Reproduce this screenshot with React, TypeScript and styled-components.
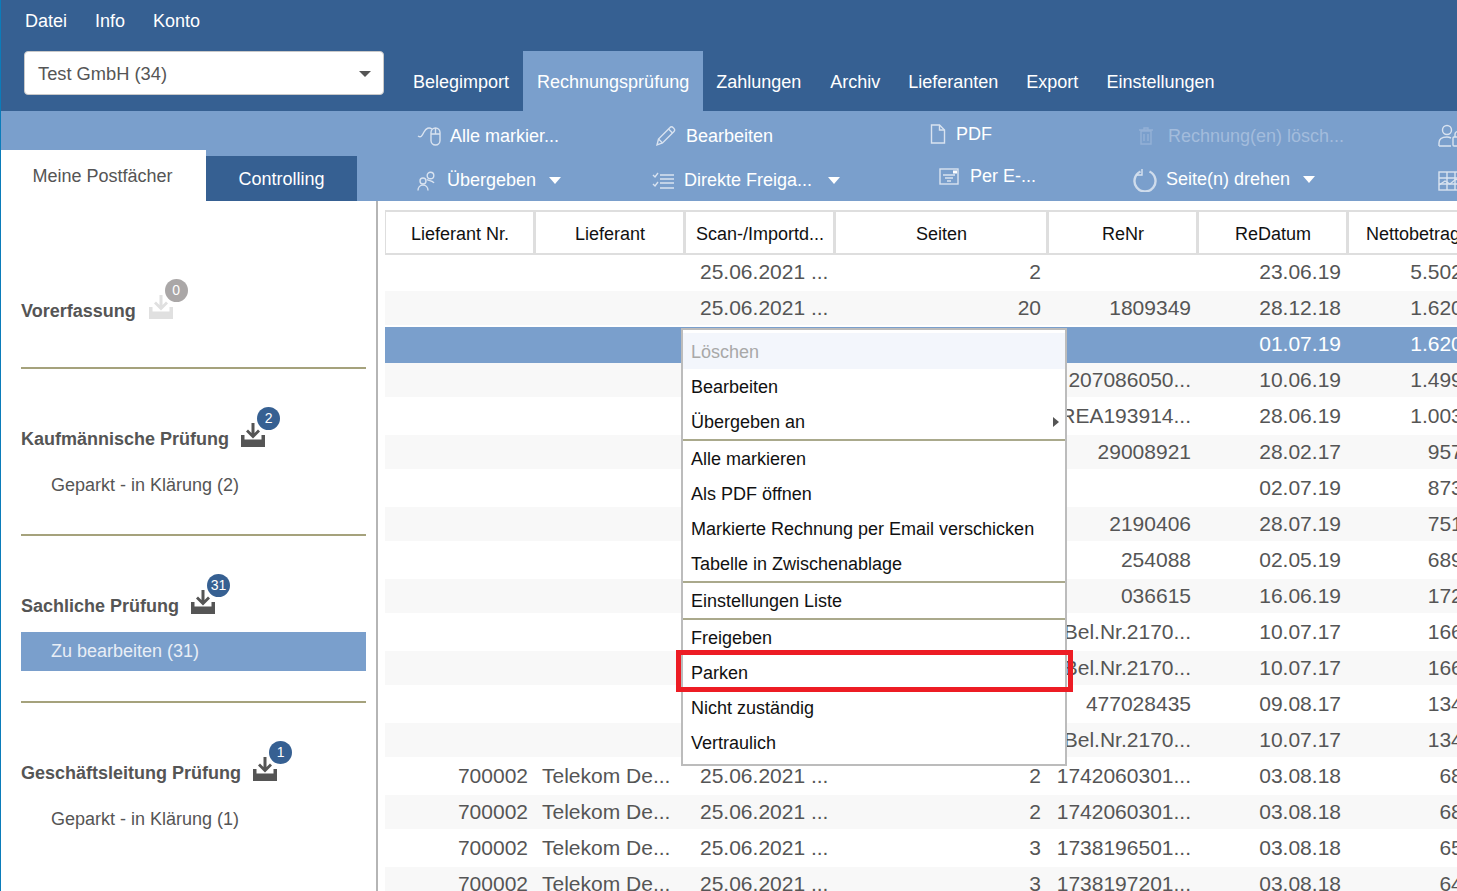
import React from 'react';
import styled, { createGlobalStyle } from 'styled-components';

const GlobalStyle = createGlobalStyle`
  html, body {
    margin: 0;
    height: 100%;
    overflow: hidden;
    background: #fff;
    font-family: "Liberation Sans", Arial, sans-serif;
  }
`;

const Page = styled.div`
  position: relative;
  width: 1457px;
  height: 891px;
  overflow: hidden;
  box-sizing: border-box;
  border-left: 1px solid #0b7cba;
`;

const TopBar = styled.header`
  height: 111px;
  background: #366092;
  display: grid;
  grid-template-columns: 383px 1fr;
  grid-template-rows: 41px 70px;
  color: #fff;
  font-size: 18px;
`;

const MenuRow = styled.nav`
  grid-column: 1 / 3;
  display: flex;
  gap: 28px;
  padding: 2px 0 0 24px;
  align-items: center;
`;

const CompanySelect = styled.div`
  width: 360px;
  height: 44px;
  margin: 10px 0 0 23px;
  box-sizing: border-box;
  background: #fff;
  border: 1px solid #c9c9c9;
  border-radius: 4px;
  color: #555;
  font-size: 18.3px;
  display: flex;
  align-items: center;
  justify-content: space-between;
  padding: 2px 12px 0 13px;
`;

const SelectCaret = styled.span`
  border-left: 6px solid transparent;
  border-right: 6px solid transparent;
  border-top: 6px solid #555;
`;

const MainTabs = styled.div`
  display: flex;
  align-items: stretch;
  padding-top: 10px;
  padding-left: 15px;
`;

const MainTab = styled.div<{ $active?: boolean; $right?: number }>`
  padding: 21px ${(p) => p.$right ?? 14}px 0 14px;
  margin-right: ${(p) => (p.$active ? '-1px' : '0')};
  background: ${(p) => (p.$active ? '#7a9fcc' : 'transparent')};
  white-space: nowrap;
`;

const ToolStrip = styled.div`
  height: 90px;
  background: #7a9fcc;
  display: flex;
  align-items: flex-end;
`;

const SideTabs = styled.div`
  width: 356px;
  display: flex;
  align-items: flex-end;
  flex: none;
`;

const SideTab = styled.div<{ $active?: boolean }>`
  box-sizing: border-box;
  width: ${(p) => (p.$active ? '205px' : '151px')};
  height: ${(p) => (p.$active ? '51px' : '45px')};
  padding: ${(p) => (p.$active ? '16px 2px 0 0' : '13px 0 0 0')};
  background: ${(p) => (p.$active ? '#fff' : '#366092')};
  color: ${(p) => (p.$active ? '#555' : '#fff')};
  font-size: 18px;
  text-align: center;
`;

const ToolGrid = styled.div`
  flex: 1;
  height: 90px;
  display: grid;
  grid-template-columns: 236px 277px 204px 304px 1fr;
  grid-template-rows: 50px 39px;
  padding-left: 60px;
`;

const ToolItem = styled.div<{ $disabled?: boolean; $gap?: number; $indent?: number; $lift?: number }>`
  display: flex;
  align-items: center;
  gap: ${(p) => p.$gap ?? 9}px;
  margin-left: ${(p) => p.$indent ?? 0}px;
  padding-bottom: ${(p) => p.$lift ?? 0}px;
  color: ${(p) => (p.$disabled ? '#a3bcdc' : '#fff')};
  font-size: 18px;
  white-space: nowrap;
  svg {
    flex: none;
    fill: none;
    stroke: ${(p) => (p.$disabled ? '#94b1d6' : '#d9e3f0')};
    stroke-width: 1.4;
  }
`;

const ToolCaret = styled.span<{ $left?: number }>`
  margin-left: ${(p) => p.$left ?? 4}px;
  border-left: 6px solid transparent;
  border-right: 6px solid transparent;
  border-top: 7px solid #fff;
`;

const Body = styled.div`
  display: flex;
  height: 690px;
`;

const Sidebar = styled.aside`
  width: 377px;
  box-sizing: border-box;
  flex: none;
  border-right: 2px solid #b5b5b5;
  padding: 0 10px 0 20px;
`;

const Section = styled.section<{ $height: number; $ruled?: boolean }>`
  box-sizing: border-box;
  height: ${(p) => p.$height}px;
  border-bottom: ${(p) => (p.$ruled ? '2px solid #a5a27c' : 'none')};
`;

const SectionHead = styled.div<{ $top: number; $gap?: number }>`
  display: flex;
  align-items: flex-end;
  gap: ${(p) => p.$gap ?? 12}px;
  padding-top: ${(p) => p.$top}px;
`;

const SectionTitle = styled.h3`
  margin: 0;
  font-size: 18px;
  line-height: 21px;
  font-weight: 700;
  color: #555;
`;

const InboxWrap = styled.span<{ $muted?: boolean }>`
  position: relative;
  display: block;
  width: 24px;
  height: 24px;
  margin-bottom: 3px;
  color: ${(p) => (p.$muted ? '#e0e0e0' : '#555')};
  svg {
    display: block;
  }
`;

const Badge = styled.span<{ $muted?: boolean }>`
  position: absolute;
  left: 16px;
  top: -16px;
  width: 23px;
  height: 23px;
  border-radius: 50%;
  background: ${(p) => (p.$muted ? '#aaa7a7' : '#366092')};
  color: #fff;
  font-size: 14px;
  line-height: 23px;
  text-align: center;
`;

const SubItem = styled.div<{ $active?: boolean; $top: number }>`
  margin-top: ${(p) => p.$top}px;
  height: 39px;
  padding-left: 30px;
  line-height: 39px;
  font-size: 18px;
  color: ${(p) => (p.$active ? '#e8eef6' : '#555')};
  background: ${(p) => (p.$active ? '#7a9fcc' : 'transparent')};
`;

const TableArea = styled.div`
  flex: 1;
  padding: 9px 0 0 7px;
  min-width: 0;
`;

const Columns = `
  display: grid;
  grid-template-columns: 150px 150px 150px 213px 150px 150px 150px;
  width: 1113px;
`;

const HeaderRow = styled.div`
  ${Columns}
  height: 45px;
`;

const HeaderCell = styled.div`
  box-sizing: border-box;
  border: 2px solid #dedede;
  border-left-width: 1px;
  padding: 2px 0 0 1px;
  background: #fff;
  color: #111;
  font-size: 18px;
  line-height: 41px;
  text-align: center;
  white-space: nowrap;
  overflow: hidden;

  &:last-child {
    text-align: left;
    padding-left: 17px;
  }
`;

const DataRow = styled.div<{ $tone: 'plain' | 'shade' | 'selected' }>`
  ${Columns}
  height: 36px;
  box-sizing: border-box;
  background: ${(p) =>
    p.$tone === 'selected' ? '#7a9fcc' : p.$tone === 'shade' ? '#f8f8f8' : '#fff'};
  border-bottom: ${(p) => (p.$tone === 'shade' ? '2px solid #fff' : 'none')};
  color: ${(p) => (p.$tone === 'selected' ? '#fff' : '#555')};
`;

const DataCell = styled.div<{ $right?: boolean; $pad?: number }>`
  font-size: 21px;
  line-height: 33px;
  white-space: nowrap;
  overflow: hidden;
  box-sizing: border-box;
  text-align: ${(p) => (p.$right ? 'right' : 'left')};
  padding: ${(p) => (p.$right ? `0 ${p.$pad ?? 7}px 0 0` : `0 0 0 ${p.$pad ?? 7}px`)};
`;

const ContextMenu = styled.div`
  position: absolute;
  left: 680px;
  top: 328px;
  width: 386px;
  height: 438px;
  box-sizing: border-box;
  padding-top: 3px;
  background: #fff;
  border: 2px solid #bcbcbc;
  color: #111;
  font-size: 18px;
`;

const MenuGroup = styled.div<{ $last?: boolean }>`
  border-bottom: ${(p) => (p.$last ? 'none' : '2px solid #aaa98c')};
`;

const MenuItem = styled.div<{ $disabled?: boolean }>`
  position: relative;
  height: ${(p) => (p.$disabled ? '36px' : '35px')};
  line-height: ${(p) => (p.$disabled ? '39px' : '37px')};
  padding-left: 8px;
  color: ${(p) => (p.$disabled ? '#a8a8a8' : '#111')};
  background: ${(p) => (p.$disabled ? '#f3f6fc' : 'transparent')};
`;

const SubArrow = styled.span`
  position: absolute;
  right: 6px;
  top: 13px;
  border-top: 5px solid transparent;
  border-bottom: 5px solid transparent;
  border-left: 6px solid #555;
`;

const Highlight = styled.div`
  position: absolute;
  left: 675px;
  top: 650px;
  width: 397px;
  height: 42px;
  box-sizing: border-box;
  border: 5px solid #ed1c24;
`;

const MouseIcon = () => (
  <svg width="24" height="20" viewBox="0 0 24 20">
    <rect x="14" y="2" width="9" height="17" rx="4.5" />
    <path d="M14 8h9M18.500 2v6M1 10c3 2 4 0 6-4s5-5 8-3" />
  </svg>
);

const PencilIcon = () => (
  <svg width="22" height="22" viewBox="0 0 22 22">
    <path d="M2 20l1.500-6L15 2.500a2 2 0 0 1 3 0l1 1a2 2 0 0 1 0 3L7.500 18z" />
    <path d="M3.500 14l4 4M13.500 4l4 4" />
  </svg>
);

const FileIcon = () => (
  <svg width="16" height="20" viewBox="0 0 16 20">
    <path d="M1.500 1h8l5 5v13h-13z" />
    <path d="M9.500 1v5h5" />
  </svg>
);

const TrashIcon = () => (
  <svg width="16" height="20" viewBox="0 0 16 20">
    <path d="M3 5h10v13H3zM1 4h14M6 4V2h4v2M6 8v7M10 8v7" />
  </svg>
);

const UsersIcon = () => (
  <svg width="18" height="20" viewBox="0 0 18 20">
    <circle cx="13.500" cy="4.500" r="3.300" />
    <circle cx="6" cy="10" r="3" />
    <path d="M1 19.500c0-3 2-5.500 5-5.500s5 2.500 5 5.500M10 8.500c2 1.500 5.500 1 7 3.500" />
  </svg>
);

const ChecklistIcon = () => (
  <svg width="23" height="18" viewBox="0 0 23 18">
    <path d="M8 3h14M8 7h14M8 11h14M8 16h14M1 3l2 2 3-4M1 12l2 2 3-4" />
  </svg>
);

const MailIcon = () => (
  <svg width="20" height="17" viewBox="0 0 20 17">
    <rect x="1" y="1" width="18" height="15" />
    <path d="M4 7h12M6 10h8M8 13h4" />
    <rect x="14" y="2.500" width="4" height="3" fill="#fff" stroke="none" />
  </svg>
);

const RotateIcon = () => (
  <svg width="24" height="24" viewBox="0 0 24 24">
    <path d="M7.500 3.500a10.500 10.500 0 1 0 9 0" strokeWidth="2.400" stroke="#cfdcec" />
    <path d="M9 1v6H3.500" strokeWidth="1.400" />
  </svg>
);

const UserLockIcon = () => (
  <svg width="26" height="24" viewBox="0 0 26 24">
    <circle cx="9" cy="6" r="4.500" />
    <path d="M1 22v-3c0-4 3-6 8-6 2 0 3 .5 4 1M1 22h12" />
    <rect x="15" y="13" width="10" height="9" rx="1" />
    <path d="M17 13v-2.500a3 3 0 0 1 6 0V13" />
  </svg>
);

const ChartIcon = () => (
  <svg width="26" height="20" viewBox="0 0 26 20">
    <rect x="1" y="1" width="24" height="18" />
    <path d="M1 7h24M1 13h24M9 1v18M17 1v18" />
    <path d="M1 14l6-4 5 3 6-5 7 4" />
  </svg>
);

const InboxIcon = () => (
  <svg width="24" height="24" viewBox="0 0 24 24" fill="currentColor">
    <path d="M10.500 0h3v10l3.500-3.500 2 2-7 7-7-7 2-2 3.500 3.500z" />
    <path d="M0 12h3.500v4.500h17V12H24v12H0z" />
  </svg>
);

type Row = {
  nr?: string;
  name?: string;
  scan?: string;
  pages?: string;
  renr?: string;
  date: string;
  net: string;
  tone: 'plain' | 'shade' | 'selected';
};

const rows: Row[] = [
  { scan: '25.06.2021 ...', pages: '2', date: '23.06.19', net: '5.502,00', tone: 'plain' },
  { scan: '25.06.2021 ...', pages: '20', renr: '1809349', date: '28.12.18', net: '1.620,00', tone: 'shade' },
  { date: '01.07.19', net: '1.620,00', tone: 'selected' },
  { renr: '207086050...', date: '10.06.19', net: '1.499,00', tone: 'shade' },
  { renr: 'REA193914...', date: '28.06.19', net: '1.003,00', tone: 'plain' },
  { renr: '29008921', date: '28.02.17', net: '957,00', tone: 'shade' },
  { date: '02.07.19', net: '873,00', tone: 'plain' },
  { renr: '2190406', date: '28.07.19', net: '751,00', tone: 'shade' },
  { renr: '254088', date: '02.05.19', net: '689,00', tone: 'plain' },
  { renr: '036615', date: '16.06.19', net: '172,00', tone: 'shade' },
  { renr: 'Bel.Nr.2170...', date: '10.07.17', net: '166,00', tone: 'plain' },
  { renr: 'Bel.Nr.2170...', date: '10.07.17', net: '166,00', tone: 'shade' },
  { renr: '477028435', date: '09.08.17', net: '134,00', tone: 'plain' },
  { renr: 'Bel.Nr.2170...', date: '10.07.17', net: '134,00', tone: 'shade' },
  { nr: '700002', name: 'Telekom De...', scan: '25.06.2021 ...', pages: '2', renr: '1742060301...', date: '03.08.18', net: '68,00', tone: 'plain' },
  { nr: '700002', name: 'Telekom De...', scan: '25.06.2021 ...', pages: '2', renr: '1742060301...', date: '03.08.18', net: '68,00', tone: 'shade' },
  { nr: '700002', name: 'Telekom De...', scan: '25.06.2021 ...', pages: '3', renr: '1738196501...', date: '03.08.18', net: '65,00', tone: 'plain' },
  { nr: '700002', name: 'Telekom De...', scan: '25.06.2021 ...', pages: '3', renr: '1738197201...', date: '03.08.18', net: '64,00', tone: 'shade' },
];

const headers = ['Lieferant Nr.', 'Lieferant', 'Scan-/Importd...', 'Seiten', 'ReNr', 'ReDatum', 'Nettobetrag'];

const menuGroups = [
  [{ label: 'Löschen', disabled: true }, { label: 'Bearbeiten' }, { label: 'Übergeben an', sub: true }],
  [{ label: 'Alle markieren' }, { label: 'Als PDF öffnen' }, { label: 'Markierte Rechnung per Email verschicken' }, { label: 'Tabelle in Zwischenablage' }],
  [{ label: 'Einstellungen Liste' }],
  [{ label: 'Freigeben' }, { label: 'Parken' }, { label: 'Nicht zuständig' }, { label: 'Vertraulich' }],
];

const App = () => (
  <Page>
    <GlobalStyle />
    <TopBar>
      <MenuRow>
        <span>Datei</span>
        <span>Info</span>
        <span>Konto</span>
      </MenuRow>
      <CompanySelect>
        Test GmbH (34)
        <SelectCaret />
      </CompanySelect>
      <MainTabs>
        <MainTab>Belegimport</MainTab>
        <MainTab $active>Rechnungsprüfung</MainTab>
        <MainTab $right={15}>Zahlungen</MainTab>
        <MainTab>Archiv</MainTab>
        <MainTab>Lieferanten</MainTab>
        <MainTab>Export</MainTab>
        <MainTab>Einstellungen</MainTab>
      </MainTabs>
    </TopBar>

    <ToolStrip>
      <SideTabs>
        <SideTab $active>Meine Postfächer</SideTab>
        <SideTab>Controlling</SideTab>
      </SideTabs>
      <ToolGrid>
        <ToolItem><MouseIcon />Alle markier...</ToolItem>
        <ToolItem $indent={2}><PencilIcon />Bearbeiten</ToolItem>
        <ToolItem $gap={10} $lift={4}><FileIcon />PDF</ToolItem>
        <ToolItem $gap={14} $indent={4} $disabled><TrashIcon />Rechnung(en) lösch...</ToolItem>
        <ToolItem><UserLockIcon /></ToolItem>
        <ToolItem $gap={12}><UsersIcon />Übergeben<ToolCaret $left={1} /></ToolItem>
        <ToolItem $indent={-1}><ChecklistIcon />Direkte Freiga...<ToolCaret $left={7} /></ToolItem>
        <ToolItem $gap={11} $indent={9} $lift={8}><MailIcon />Per E-...</ToolItem>
        <ToolItem $indent={-1} $lift={2}><RotateIcon />Seite(n) drehen<ToolCaret $left={4} /></ToolItem>
        <ToolItem><ChartIcon /></ToolItem>
      </ToolGrid>
    </ToolStrip>

    <Body>
      <Sidebar>
        <Section $height={168} $ruled>
          <SectionHead $top={94} $gap={13}>
            <SectionTitle>Vorerfassung</SectionTitle>
            <InboxWrap $muted>
              <InboxIcon />
              <Badge $muted>0</Badge>
            </InboxWrap>
          </SectionHead>
        </Section>
        <Section $height={167} $ruled>
          <SectionHead $top={54}>
            <SectionTitle>Kaufmännische Prüfung</SectionTitle>
            <InboxWrap>
              <InboxIcon />
              <Badge>2</Badge>
            </InboxWrap>
          </SectionHead>
          <SubItem $top={16}>Geparkt - in Klärung (2)</SubItem>
        </Section>
        <Section $height={167} $ruled>
          <SectionHead $top={54}>
            <SectionTitle>Sachliche Prüfung</SectionTitle>
            <InboxWrap>
              <InboxIcon />
              <Badge>31</Badge>
            </InboxWrap>
          </SectionHead>
          <SubItem $active $top={15}>Zu bearbeiten (31)</SubItem>
        </Section>
        <Section $height={188}>
          <SectionHead $top={54}>
            <SectionTitle>Geschäftsleitung Prüfung</SectionTitle>
            <InboxWrap>
              <InboxIcon />
              <Badge>1</Badge>
            </InboxWrap>
          </SectionHead>
          <SubItem $top={16}>Geparkt - in Klärung (1)</SubItem>
        </Section>
      </Sidebar>

      <TableArea>
        <HeaderRow>
          {headers.map((h) => (
            <HeaderCell key={h}>{h}</HeaderCell>
          ))}
        </HeaderRow>
        {rows.map((r, i) => (
          <DataRow key={i} $tone={r.tone}>
            <DataCell $right>{r.nr}</DataCell>
            <DataCell>{r.name}</DataCell>
            <DataCell $pad={15}>{r.scan}</DataCell>
            <DataCell $right>{r.pages}</DataCell>
            <DataCell $right>{r.renr}</DataCell>
            <DataCell $right>{r.date}</DataCell>
            <DataCell $right $pad={6}>{r.net}</DataCell>
          </DataRow>
        ))}
      </TableArea>
    </Body>

    <ContextMenu>
      {menuGroups.map((group, g) => (
        <MenuGroup key={g} $last={g === menuGroups.length - 1}>
          {group.map((item) => (
            <MenuItem key={item.label} $disabled={'disabled' in item}>
              {item.label}
              {'sub' in item && <SubArrow />}
            </MenuItem>
          ))}
        </MenuGroup>
      ))}
    </ContextMenu>
    <Highlight />
  </Page>
);

export default App;
